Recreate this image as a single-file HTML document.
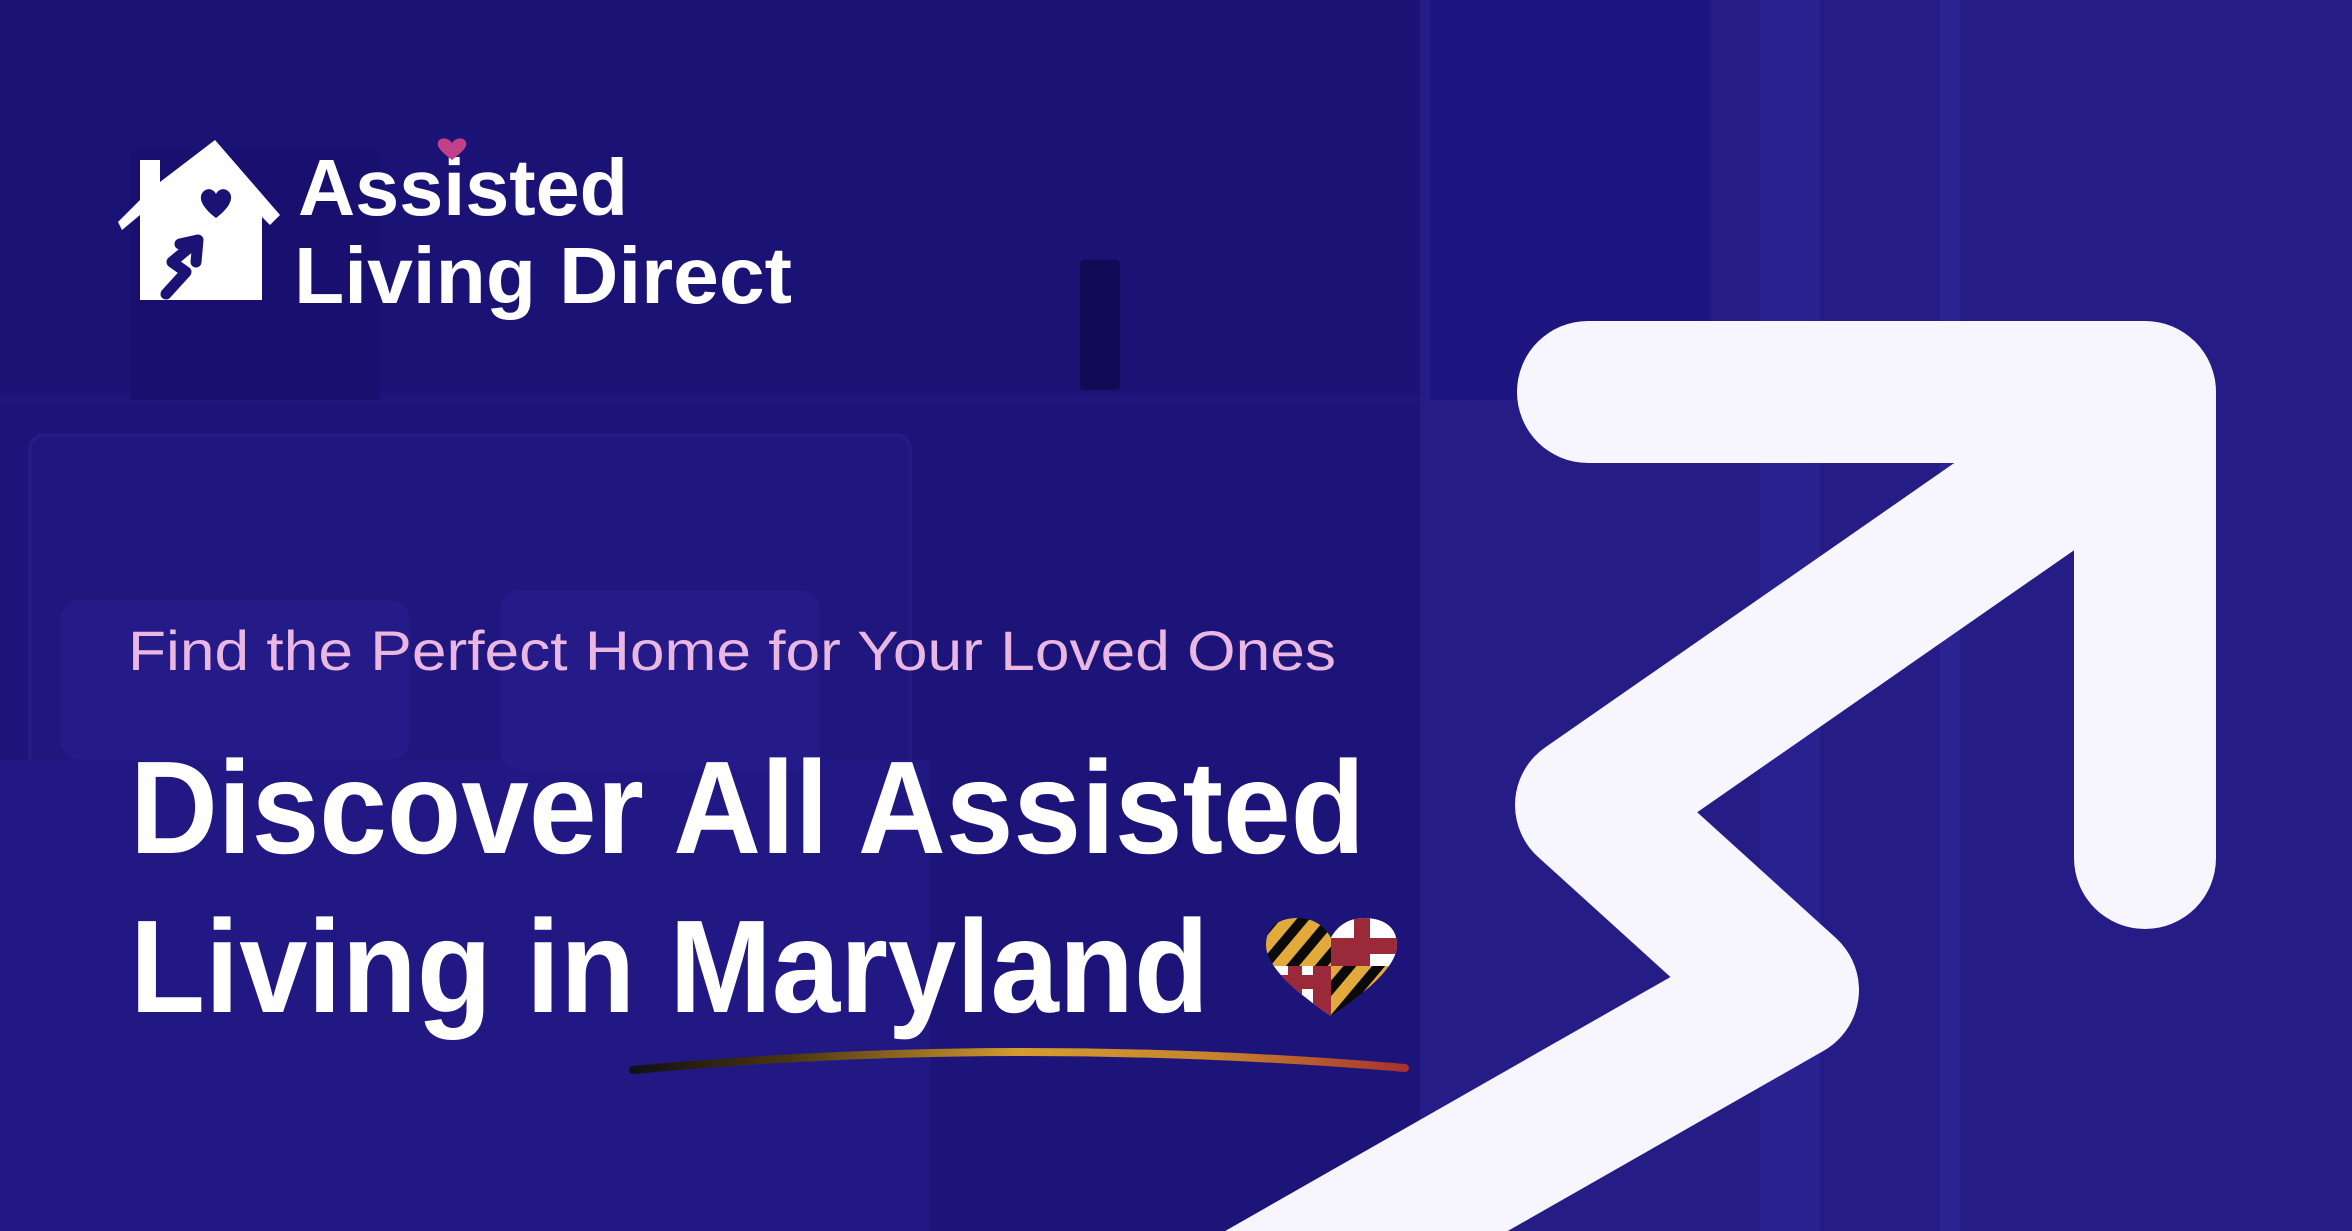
<!DOCTYPE html>
<html><head><meta charset="utf-8"><style>
html,body{margin:0;padding:0;background:#1a1275;overflow:hidden;width:2352px;height:1231px}
svg{display:block}
</style></head><body>
<svg width="2352" height="1231" viewBox="0 0 2352 1231" xmlns="http://www.w3.org/2000/svg">
<defs>
<linearGradient id="ul" x1="0" x2="1" y1="0" y2="0">
<stop offset="0" stop-color="#111"/><stop offset="0.2" stop-color="#4a3510"/><stop offset="0.5" stop-color="#d59c2e"/><stop offset="0.75" stop-color="#c7842e"/><stop offset="1" stop-color="#a8322e"/></linearGradient>
<clipPath id="hc"><path d="M1331,1016 C1300,995 1266,968 1266,945 C1266,925 1281,918 1298,918 C1313,918 1325,926 1331,938 C1337,926 1349,918 1364,918 C1381,918 1397,925 1397,945 C1397,968 1362,995 1331,1016 Z"/></clipPath>
<clipPath id="frame"><rect width="2352" height="1231"/></clipPath>
<pattern id="stripes" width="22" height="22" patternUnits="userSpaceOnUse" patternTransform="rotate(40)"><rect width="22" height="22" fill="#e2a93b"/><rect width="10" height="22" fill="#0a0a0a"/></pattern>
</defs>
<g clip-path="url(#frame)">
<rect width="2352" height="1231" fill="#1a1275"/>
<rect x="0" y="400" width="1430" height="831" fill="#1c1479"/>
<rect x="30" y="435" width="880" height="430" rx="14" fill="#1f167e" stroke="#241b86" stroke-width="4"/>
<rect x="0" y="760" width="930" height="471" fill="#211884"/>
<rect x="60" y="600" width="350" height="160" rx="20" fill="#241b88"/>
<rect x="500" y="590" width="320" height="180" rx="20" fill="#241b88"/>
<rect x="1420" y="0" width="932" height="1231" fill="#251c86"/>
<rect x="1430" y="0" width="280" height="400" fill="#1e1680"/>
<rect x="1760" y="0" width="60" height="1231" fill="#2a2190"/>
<rect x="1940" y="0" width="20" height="1231" fill="#2c2392"/>
<rect x="0" y="395" width="1420" height="8" fill="#1e167c"/>
<rect x="1080" y="260" width="40" height="130" rx="4" fill="#110a55"/>
<rect x="130" y="150" width="250" height="250" fill="#180f6e"/>
<!-- logo -->
<path d="M140,300 L140,215 L122,230 L118,222 L140,200 L140,160 L160,160 L160,182 L215,140 L280,215 L270,225 L262,217 L262,300 Z" fill="#fff"/>
<path d="M216,218 C200,206 198,196 204,191 C209,187 214,190 216,194 C218,190 223,187 228,191 C234,196 232,206 216,218 Z" fill="#1a1275"/>
<path d="M166,294 L186,272 L172,262 L196,242 M180,244 L198,240 L196,262" stroke="#1a1275" stroke-width="11" fill="none" stroke-linecap="round" stroke-linejoin="round"/>
<text x="298" y="215" font-family="Liberation Sans, sans-serif" font-weight="700" font-size="80" fill="#fff" textLength="330" lengthAdjust="spacingAndGlyphs">Assisted</text>
<text x="294" y="303" font-family="Liberation Sans, sans-serif" font-weight="700" font-size="80" fill="#fff" textLength="498" lengthAdjust="spacingAndGlyphs">Living Direct</text>
<path d="M452,160 C443,153 436,147 438,142 C440,137 448,137 452,143 C456,137 464,137 466,142 C468,147 461,153 452,160 Z" fill="#c2408a"/>
<!-- texts -->
<text x="128" y="670" font-family="Liberation Sans, sans-serif" font-size="56" fill="#e9b7e2" textLength="1208" lengthAdjust="spacingAndGlyphs">Find the Perfect Home for Your Loved Ones</text>
<text x="130" y="853" font-family="Liberation Sans, sans-serif" font-weight="700" font-size="132" fill="#fff" textLength="1235" lengthAdjust="spacingAndGlyphs">Discover All Assisted</text>
<text x="130" y="1012" font-family="Liberation Sans, sans-serif" font-weight="700" font-size="132" fill="#fff" textLength="1079" lengthAdjust="spacingAndGlyphs">Living in Maryland</text>
<path d="M633,1070 Q1010,1035 1405,1068" stroke="url(#ul)" stroke-width="8" fill="none" stroke-linecap="round"/>
<!-- MD heart -->
<g clip-path="url(#hc)">
<rect x="1260" y="915" width="72" height="52" fill="url(#stripes)"/>
<rect x="1331" y="915" width="70" height="52" fill="#fff"/>
<rect x="1331" y="938" width="70" height="16" fill="#9a2a3a"/>
<rect x="1354" y="915" width="16" height="52" fill="#9a2a3a"/>
<rect x="1331" y="915" width="23" height="23" fill="#fff"/>
<rect x="1331" y="945" width="23" height="22" fill="#9a2a3a"/>
<rect x="1260" y="966" width="72" height="52" fill="#fff"/>
<rect x="1260" y="975" width="72" height="14" fill="#9a2a3a"/>
<rect x="1288" y="966" width="14" height="52" fill="#9a2a3a"/>
<rect x="1313" y="966" width="19" height="52" fill="#9a2a3a"/>
<rect x="1331" y="966" width="70" height="52" fill="url(#stripes)"/>
</g>
<!-- big arrow -->
<g fill="none" stroke="#f7f5fd" stroke-linecap="round" stroke-linejoin="round">
<path d="M1588,392 L2145,392 L2145,858" stroke-width="142"/>
<path d="M2110,440 L1585,805 L1789,990 L1000,1440" stroke-width="140"/>
</g>
</g>
</svg>
</body></html>
